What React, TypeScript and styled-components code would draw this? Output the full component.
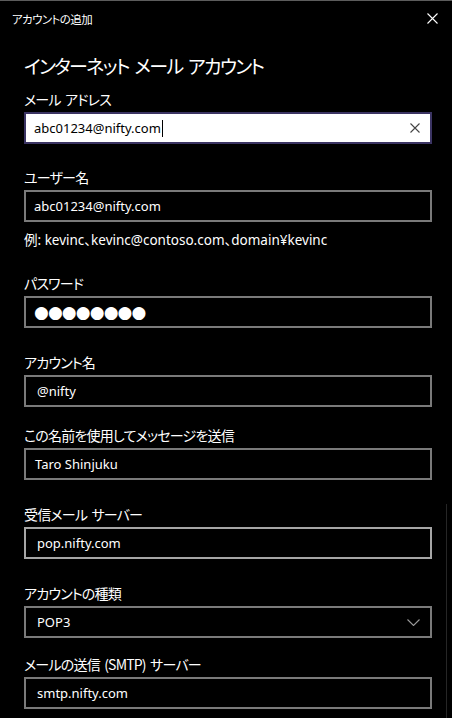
import React from "react";
import styled, { createGlobalStyle } from "styled-components";

const GlobalStyle = createGlobalStyle`
    html, body {
        margin: 0;
        padding: 0;
        background: #000;
    }
    * {
        box-sizing: border-box;
    }
`;

const Window = styled.div`
    position: relative;
    width: 452px;
    height: 718px;
    overflow: hidden;
    background: #000;
    border-top: 1px solid #5c5c5c;
    color: #fff;
    font-family: "Noto Sans CJK JP", sans-serif;
    font-feature-settings: "palt";
`;

const TitleBar = styled.div`
    display: flex;
    align-items: center;
    justify-content: space-between;
    height: 35px;
    padding: 0 14px 0 12px;
`;

const TitleText = styled.span`
    font-size: 11.5px;
    letter-spacing: -0.6px;
    color: #fff;
`;

const CloseButton = styled.span`
    display: flex;
    width: 12px;
    height: 12px;
    align-items: center;
    justify-content: center;
`;

const Content = styled.div`
    display: flex;
    flex-direction: column;
    padding: 16px 20px 0 24px;
`;

const Heading = styled.h1`
    margin: 0;
    font-size: 19px;
    line-height: 28px;
    letter-spacing: -1.7px;
    word-spacing: 3px;
    font-weight: 400;
    color: #fff;
`;

const Label = styled.div<{ $top: number }>`
    margin-top: ${(p) => p.$top}px;
    margin-bottom: 3px;
    font-size: 14px;
    line-height: 20px;
    letter-spacing: -0.8px;
    word-spacing: 2px;
    color: #fff;
`;

const Hint = styled.div`
    margin-top: 8px;
    font-family: "Segoe UI", "Noto Sans", "Noto Sans CJK JP", sans-serif;
    font-size: 13.5px;
    line-height: 20px;
    color: #fff;
`;

const Box = styled.div<{ $variant?: "focus" | "hover" }>`
    display: flex;
    align-items: center;
    height: 32px;
    width: 408px;
    padding: 0 10px 0 8px;
    border: 2px solid
        ${(p) => (p.$variant === "focus" ? "#3b3463" : p.$variant === "hover" ? "#a6a6a6" : "#7a7a7a")};
    background: ${(p) => (p.$variant === "focus" ? "#fff" : "#000")};
    color: ${(p) => (p.$variant === "focus" ? "#000" : "#fff")};
    font-family: "Segoe UI", "Noto Sans", "Noto Sans CJK JP", sans-serif;
    font-size: 13px;
`;

const Value = styled.span<{ $pad?: number }>`
    flex: 1;
    display: flex;
    align-items: center;
    padding-left: ${(p) => p.$pad ?? 0}px;
    white-space: nowrap;
`;

const Caret = styled.span`
    display: inline-block;
    width: 1px;
    height: 17px;
    margin-left: 1px;
    background: #000;
`;

const Dots = styled.span`
    font-family: "DejaVu Sans", sans-serif;
    font-size: 17px;
    letter-spacing: -0.9px;
`;

const ScrollLine = styled.div`
    position: absolute;
    right: 5px;
    top: 503px;
    bottom: 0;
    width: 1px;
    background: #262626;
`;

const fields: { label: string; value: string; top: number; variant?: "hover"; pad?: number }[] = [
    { label: "アカウント名", value: "@nifty", top: 24, pad: 3 },
    { label: "この名前を使用してメッセージを送信", value: "Taro Shinjuku", top: 18, pad: 1 },
    { label: "受信メール サーバー", value: "pop.nifty.com", top: 24, variant: "hover", pad: 3 },
];

const App = () => {
    return (
        <>
            <GlobalStyle />
            <Window>
                <TitleBar>
                    <TitleText>アカウントの追加</TitleText>
                    <CloseButton>
                        <svg width="11" height="11" viewBox="0 0 11 11">
                            <path d="M0.5 0.5 L10.5 10.5 M10.5 0.5 L0.5 10.5" stroke="#fff" strokeWidth="1.1" />
                        </svg>
                    </CloseButton>
                </TitleBar>
                <Content>
                    <Heading>インターネット メール アカウント</Heading>

                    <Label $top={9}>メール アドレス</Label>
                    <Box $variant="focus">
                        <Value>
                            abc01234@nifty.com
                            <Caret />
                        </Value>
                        <svg width="10" height="10" viewBox="0 0 10 10">
                            <path d="M0.5 0.5 L9.5 9.5 M9.5 0.5 L0.5 9.5" stroke="#444" strokeWidth="1.1" />
                        </svg>
                    </Box>

                    <Label $top={23}>ユーザー名</Label>
                    <Box>
                        <Value>abc01234@nifty.com</Value>
                    </Box>
                    <Hint>例: kevinc、kevinc@contoso.com、domain¥kevinc</Hint>

                    <Label $top={23}>パスワード</Label>
                    <Box>
                        <Dots>●●●●●●●●</Dots>
                    </Box>

                    {fields.map((item, index) => (
                        <React.Fragment key={index}>
                            <Label $top={item.top}>{item.label}</Label>
                            <Box $variant={item.variant}>
                                <Value $pad={item.pad}>{item.value}</Value>
                            </Box>
                        </React.Fragment>
                    ))}

                    <Label $top={24}>アカウントの種類</Label>
                    <Box>
                        <Value $pad={3}>POP3</Value>
                        <svg width="13" height="7" viewBox="0 0 13 7">
                            <path d="M0.5 0.5 L6.5 6.5 L12.5 0.5" stroke="#9a9a9a" strokeWidth="1.1" fill="none" />
                        </svg>
                    </Box>

                    <Label $top={16}>メールの送信 (SMTP) サーバー</Label>
                    <Box>
                        <Value $pad={3}>smtp.nifty.com</Value>
                    </Box>
                </Content>
                <ScrollLine />
            </Window>
        </>
    );
};

export default App;
